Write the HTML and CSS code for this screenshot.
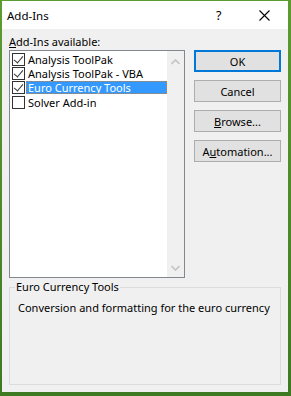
FILE: index.html
```html
<!DOCTYPE html>
<html>
<head>
<meta charset="utf-8">
<link rel="stylesheet" href="styles.css">
</head>
<body>
<div class="window">
  <div class="titlebar">
    <span class="title">Add-Ins</span>
    <span class="help">?</span>
    <span class="close"><svg width="11" height="11" viewBox="0 0 11 11"><path d="M0.5 0.5 L10.5 10.5 M10.5 0.5 L0.5 10.5" stroke="#000" stroke-width="1.1" fill="none"/></svg></span>
  </div>
  <div class="client">
    <div class="label"><u>A</u>dd-Ins available:</div>
    <div class="main">
      <div class="listbox">
        <div class="items">
          <div class="item"><span class="cb checked"></span><span class="txt">Analysis ToolPak</span></div>
          <div class="item"><span class="cb checked"></span><span class="txt">Analysis ToolPak - VBA</span></div>
          <div class="item selected"><span class="cb checked"></span><span class="txt">Euro Currency Tools</span></div>
          <div class="item"><span class="cb"></span><span class="txt">Solver Add-in</span></div>
        </div>
        <div class="scrollbar">
          <svg class="arrow" width="9" height="6" viewBox="0 0 9 6"><path d="M0.5 5 L4.5 1 L8.5 5" stroke="#c4c4c4" stroke-width="1.6" fill="none"/></svg>
          <svg class="arrow" width="9" height="6" viewBox="0 0 9 6"><path d="M0.5 1 L4.5 5 L8.5 1" stroke="#c4c4c4" stroke-width="1.6" fill="none"/></svg>
        </div>
      </div>
      <div class="buttons">
        <div class="btn default">OK</div>
        <div class="btn">Cancel</div>
        <div class="btn"><u>B</u>rowse...</div>
        <div class="btn">A<u>u</u>tomation...</div>
      </div>
    </div>
    <div class="group">
      <div class="legend">Euro Currency Tools</div>
      <div class="desc">Conversion and formatting for the euro currency</div>
    </div>
  </div>
</div>
</body>
</html>
```
FILE: styles.css
```css
html, body {
  margin: 0;
  padding: 0;
}
body {
  width: 291px;
  height: 396px;
  background: linear-gradient(#5c9c30, #3e7a22);
  overflow: hidden;
  font-family: "Noto Sans", "Liberation Sans", sans-serif;
  font-size: 11px;
  color: #000;
}
.window {
  margin: 1px 3px 0 2px;
  width: 286px;
  height: 391px;
  display: flex;
  flex-direction: column;
  background: #f0f0f0;
}
.titlebar {
  height: 28px;
  background: #fff;
  display: flex;
  align-items: center;
  padding-left: 5px;
}
.title {
  flex: 1;
  font-size: 11.5px;
}
.help {
  width: 14px;
  margin-right: 29px;
  font-size: 12.5px;
}
.close {
  display: flex;
  margin-right: 18px;
}
.client {
  flex: 1;
  padding: 5px 7px 0 7px;
}
.label {
  height: 16px;
  line-height: 16px;
}
.main {
  display: flex;
  gap: 9px;
}
.listbox {
  width: 174px;
  height: 226px;
  border: 1px solid #828790;
  background: #fff;
  display: flex;
}
.items {
  flex: 1;
  padding-top: 1px;
}
.item {
  height: 14.4px;
  display: flex;
  align-items: center;
  padding-left: 1px;
  line-height: 13px;
  white-space: nowrap;
}
.cb {
  width: 11px;
  height: 11px;
  border: 1px solid #333;
  background: #fff;
  margin: 0 1px 0 1px;
  position: relative;
  flex: none;
}
.cb.checked::after {
  content: "";
  position: absolute;
  left: 3px;
  top: 0px;
  width: 4px;
  height: 8px;
  border: solid #333;
  border-width: 0 1.5px 1.5px 0;
  transform: rotate(40deg);
}
.txt {
  padding: 0 2px;
  white-space: nowrap;
}
.item.selected .txt {
  background: #3399ff;
  color: #fff;
  flex: 1;
  height: 13px;
  line-height: 13px;
  outline: 1px dotted #d08030;
  outline-offset: -1px;
}
.scrollbar {
  width: 17px;
  background: #f0f0f0;
  display: flex;
  flex-direction: column;
  justify-content: space-between;
  align-items: center;
  padding: 8px 0 6px;
  box-sizing: border-box;
}
.buttons {
  display: flex;
  flex-direction: column;
  gap: 8px;
}
.btn {
  width: 85px;
  height: 20px;
  border: 1px solid #adadad;
  background: #e1e1e1;
  display: flex;
  align-items: center;
  justify-content: center;
}
.btn.default {
  width: 83px;
  height: 18px;
  border: 2px solid #0078d7;
}
.group {
  margin-top: 9px;
  width: 270px;
  height: 96px;
  border: 1px solid #dcdcdc;
  position: relative;
}
.legend {
  position: absolute;
  top: -9px;
  left: 5px;
  background: #f0f0f0;
  padding: 0 1px;
  line-height: 16px;
  white-space: nowrap;
}
.desc {
  margin: 12px 0 0 8px;
  line-height: 16px;
  white-space: nowrap;
}
```
